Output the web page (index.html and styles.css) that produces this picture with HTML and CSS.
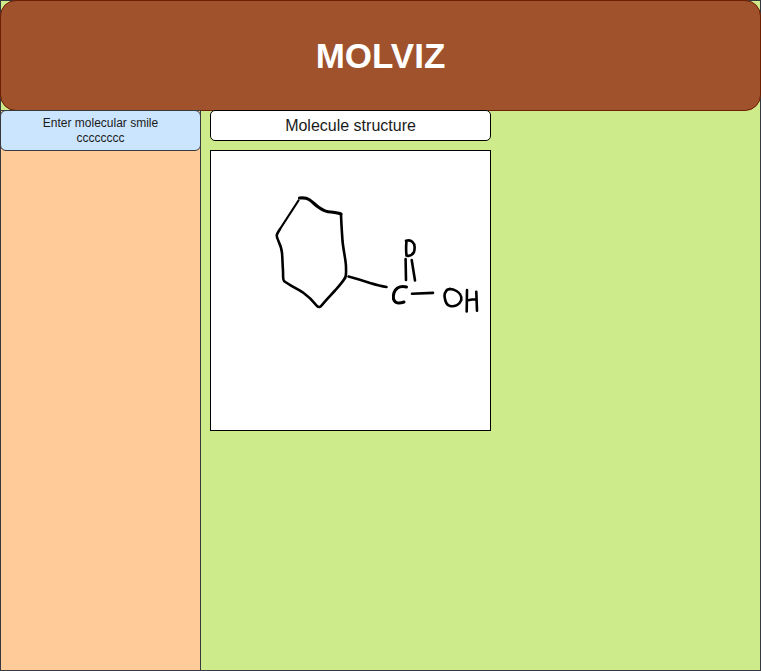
FILE: index.html
```html
<!DOCTYPE html>
<html lang="en">
<head>
<meta charset="utf-8">
<meta name="viewport" content="width=device-width, initial-scale=1">
<title>MOLVIZ</title>
<link rel="stylesheet" href="styles.css">
</head>
<body>
<div class="app">
  <header class="banner"><h1 class="banner-title">MOLVIZ</h1></header>
  <div class="workspace">
    <aside class="sidebar">
      <form class="smile-form">
        <label class="smile-label" for="smile">Enter molecular smile</label>
        <input class="smile-input" id="smile" type="text" value="cccccccc">
      </form>
    </aside>
    <main class="viewer">
      <h2 class="viewer-title">Molecule structure</h2>
      <div class="canvas">
        <svg class="molecule" viewBox="211 151 279 279" role="img" aria-label="Ring with a carboxylic acid group">
          <g fill="none" stroke="#000" stroke-width="2.6" stroke-linecap="round" stroke-linejoin="round">
            <path stroke-width="3.2" d="M299.5 198C303 197.600 306 197.500 309 199.500C313 202 315 205 319 207.500C323 210.500 327 212 331 212C335 212.500 339 213 341 214"/>
            <path d="M341 214.500C341.300 224 342 233 342.500 241C343.500 251 346 261 346 267C346 273 346.500 276 345 278"/>
            <path d="M345 278C342 283 338 287 335 290.500C329 297 325 301 322 305Q319.500 308.500 317 306C313 301 308 296 303 292.500C297 288.500 289 285 284 281C282.500 279 283.300 275 283 271C282.500 264 282.500 258 282 253C281.500 245 277 240 276.700 235.500C277 233 279 231 280 229"/>
            <path stroke-width="2.2" d="M280 229L298.500 200.500"/>
            <path d="M348.500 276.500C358 279 364 281 370 283Q380 286 386.500 287"/>
            <path d="M406.500 241C406 246 406 251 406.500 255.500C409 256.500 412 255.500 414 252C415 248 415 244 412.500 242C410.500 240 408 240.200 406 240.800"/>
            <path d="M405.600 259L406 280M411.700 260L415 280.500"/>
            <path stroke-width="3" d="M406.500 287C403 286.300 400 286.500 397.500 288C393.500 291 393 295 393.500 299C395 303.500 399 303.800 404 302"/>
            <path d="M412 293.800L433 292.900"/>
            <path d="M451 289.300C447 288.500 444.500 292 444.500 296C445 301 447 305.500 450 306C455 307 459.500 304.500 461.300 300C462 296 459 292.500 456.500 291C453 289 449 288.700 446.800 289.800"/>
            <path d="M467 290L466.700 311.500M476.300 291.800L477 310.700M467 300.500C470 299.800 473 299.200 476 299.200"/>
          </g>
        </svg>
      </div>
    </main>
  </div>
</div>
</body>
</html>
```
FILE: styles.css
```css
* { box-sizing: border-box; }

body {
  margin: 0;
  font-family: "Liberation Sans", Arial, sans-serif;
  color: #1a1a1a;
}

.app {
  display: flex;
  flex-direction: column;
  min-height: 100vh;
  background: #cdeb8b;
  border: 1px solid #36393d;
}

.banner {
  margin: -1px;
  padding: 34px 16px;
  background: #a0522d;
  border: 1px solid #6d1f00;
  border-radius: 16px;
  text-align: center;
}

.banner-title {
  margin: 0;
  font-size: 35px;
  line-height: 41px;
  color: #fff;
}

.workspace {
  flex: 1;
  display: flex;
  margin: 0 -1px -1px;
}

.sidebar {
  flex: 0 0 201px;
  background: #ffcc99;
  border: 1px solid #36393d;
}

.smile-form {
  display: flex;
  flex-direction: column;
  margin: -1px;
  padding: 5px 8px 4px;
  background: #cce5ff;
  border: 1px solid #36393d;
  border-radius: 6px;
  font-size: 12px;
  line-height: 15px;
  text-align: center;
}

.smile-input {
  width: 100%;
  height: 15px;
  padding: 0;
  border: 0;
  background: transparent;
  color: inherit;
  font: inherit;
  text-align: center;
}

.viewer {
  flex: 0 1 281px;
  display: flex;
  flex-direction: column;
  gap: 9px;
  margin-left: 9px;
}

.viewer-title {
  margin: 0;
  padding: 6px 8px 5px;
  background: #fff;
  border: 1px solid #000;
  border-radius: 5px;
  font-size: 16px;
  font-weight: 400;
  line-height: 18px;
  text-align: center;
}

.canvas {
  background: #fff;
  border: 1px solid #000;
}

.molecule {
  display: block;
  width: 100%;
}
```
